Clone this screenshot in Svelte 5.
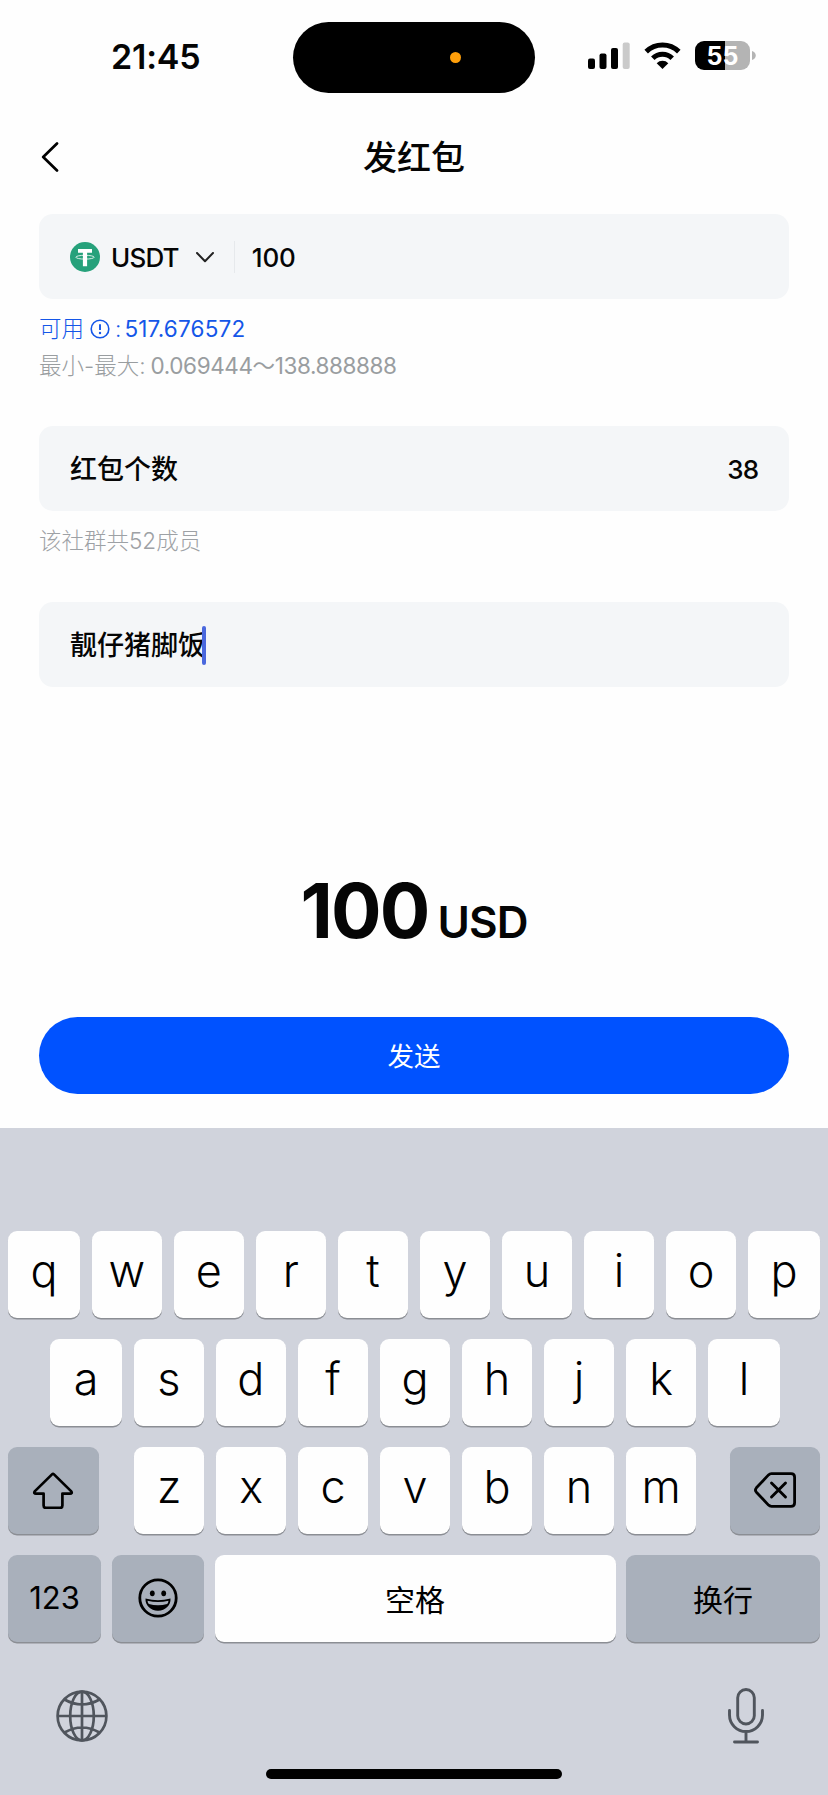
<script lang="ts">
	let currency = $state('USDT');
	let amount = $state('100');
	let count = $state('38');
	let message = $state('靓仔猪脚饭');

	const topKeys = 'qwertyuiop'.split('');
	const homeKeys = 'asdfghjkl'.split('');
	const bottomKeys = 'zxcvbnm'.split('');
</script>

<div class="screen">
	<header class="status">
		<div class="clock">21:45</div>
		<div class="island"><span class="mic-dot"></span></div>
		<div class="indicators">
			<svg class="signal" viewBox="0 0 42 27" aria-hidden="true">
				<rect x="0" y="16.5" width="7" height="10.5" rx="2" />
				<rect x="11.5" y="11.5" width="7" height="15.5" rx="2" />
				<rect x="23" y="6" width="7" height="21" rx="2" />
				<rect x="34.7" y="0.5" width="7" height="26.5" rx="2" fill="#cacaca" />
			</svg>
			<svg class="wifi" viewBox="0 0 37 27" aria-hidden="true">
				<path d="M2.2 9.6a23.2 23.2 0 0 1 32.6 0" fill="none" stroke="#000" stroke-width="5" />
				<path d="M8.8 16.3a13.8 13.8 0 0 1 19.4 0" fill="none" stroke="#000" stroke-width="5" />
				<path d="M18.5 27l-5.8-5.8a8.3 8.3 0 0 1 11.6 0z" />
			</svg>
			<div class="battery"><span>55</span></div>
			<svg class="nub" viewBox="0 0 4 9" aria-hidden="true">
				<path d="M0 0c5 1.5 5 7.5 0 9z" fill="#b4b4b4" />
			</svg>
		</div>
	</header>

	<nav class="navbar">
		<button type="button" class="back" aria-label="返回">
			<svg viewBox="0 0 18 30" width="18" height="30">
				<path d="M16 1.5L2.2 15 16 28.5" fill="none" stroke="#000" stroke-width="2.7" stroke-linecap="round" stroke-linejoin="round" />
			</svg>
		</button>
		<h1>发红包</h1>
	</nav>

	<main>
		<div class="field">
			<button type="button" class="currency">
				<svg class="coin" viewBox="0 0 30 30" aria-hidden="true">
					<circle cx="15" cy="15" r="15" fill="#26a17b" />
					<path d="M8 7h14v3.8h-4.9v13.4h-4.2V10.800H8z" fill="#fff" />
					<ellipse cx="15" cy="15.2" rx="9.2" ry="1.9" fill="none" stroke="#fff" stroke-width="0.8" />
				</svg>
				<span>{currency}</span>
				<svg class="chevron" viewBox="0 0 18 11" aria-hidden="true">
					<path d="M1 1l8 8.2L17 1" fill="none" stroke="#222" stroke-width="2" stroke-linecap="round" stroke-linejoin="round" />
				</svg>
			</button>
			<span class="divider"></span>
			<span class="amount">{amount}</span>
		</div>
		<div class="hints">
			<p class="available">
				<span>可用</span>
				<svg viewBox="0 0 20 20" width="20" height="20" aria-hidden="true">
					<circle cx="10" cy="10" r="8.8" fill="none" stroke="#1456e8" stroke-width="1.6" />
					<path d="M10 5.2v5.8" stroke="#1456e8" stroke-width="1.9" />
					<circle cx="10" cy="14" r="1.2" fill="#1456e8" />
				</svg>
				<span class="colon">:</span>
				<span class="balance">517.676572</span>
			</p>
			<p class="range"><span>最小-最大:</span><span class="limits">0.069444～138.888888</span></p>
		</div>

		<div class="field">
			<span class="label">红包个数</span>
			<span class="count">{count}</span>
		</div>
		<p class="members">该社群共52成员</p>

		<div class="field">
			<span class="label">{message}</span>
			<span class="caret"></span>
		</div>

		<div class="total"><strong>100</strong><span>USD</span></div>

		<button type="button" class="send">发送</button>
	</main>

	<section class="keyboard">
		<div class="row">
			{#each topKeys as key}
				<button type="button" class="key">{key}</button>
			{/each}
		</div>
		<div class="row home">
			{#each homeKeys as key}
				<button type="button" class="key">{key}</button>
			{/each}
		</div>
		<div class="row letters">
			<button type="button" class="key dark shift" aria-label="shift">
				<svg viewBox="0 0 42 37" width="42" height="37">
					<path d="M20 2.4q1-1 2 0L39.3 19.4q1.3 2.2-1.3 2.2H30.4v12q0 2.3-2.3 2.3H13.9q-2.3 0-2.3-2.3v-12H4q-2.6 0-1.3-2.2z" fill="none" stroke="#000" stroke-width="2.7" stroke-linejoin="round" />
				</svg>
			</button>
			{#each bottomKeys as key}
				<button type="button" class="key">{key}</button>
			{/each}
			<button type="button" class="key dark delete" aria-label="delete">
				<svg viewBox="0 0 42 36" width="42" height="36">
					<path d="M17.5 1.7H37q3.6 0 3.6 3.6v25.4q0 3.6-3.6 3.6H17.5q-1.8 0-3-1.2L2.4 20.2q-1.9-2.2 0-4.4L14.5 2.9q1.2-1.2 3-1.2z" fill="none" stroke="#000" stroke-width="2.8" />
					<path d="M17.5 11l14 14M31.5 11l-14 14" stroke="#000" stroke-width="2.9" stroke-linecap="round" />
				</svg>
			</button>
		</div>
		<div class="row bottom">
			<button type="button" class="key dark numbers">123</button>
			<button type="button" class="key dark" aria-label="emoji">
				<svg viewBox="0 0 40 40" width="40" height="40">
					<circle cx="20" cy="20" r="18.2" fill="none" stroke="#000" stroke-width="2.8" />
					<ellipse cx="14.3" cy="15.3" rx="2.4" ry="2.9" />
					<ellipse cx="25.7" cy="15.3" rx="2.4" ry="2.9" />
					<path d="M7.5 20.5q12.5 3.5 25 0c.5 6.5-5 12.3-12.5 12.3S7 27 7.5 20.5z" />
					<path d="M9.5 22.8q10.5 2.5 21 0-.3 2.2-1.3 3.3-9.2 2.4-18.4 0-1-1.1-1.3-3.3z" fill="#a9b0bb" />
				</svg>
			</button>
			<button type="button" class="key word">空格</button>
			<button type="button" class="key dark word">换行</button>
		</div>
		<div class="tools">
			<svg viewBox="0 0 52 52" width="52" height="52" fill="none" stroke="#50555d" stroke-width="2.7" aria-hidden="true">
				<circle cx="26" cy="26" r="24.4" />
				<ellipse cx="26" cy="26" rx="11.8" ry="24.4" />
				<path d="M26 1.4v49.2M1.4 26h49.2M8.5 9.5q17.5 10 35 0M8.5 42.5q17.5-10 35 0" />
			</svg>
			<svg viewBox="0 0 36 56" width="36" height="56" fill="none" stroke="#50555d" stroke-width="2.9" stroke-linecap="round" aria-hidden="true">
				<rect x="9.7" y="1.5" width="16.6" height="34.5" rx="8.3" />
				<path d="M1.5 22.5v4.5a16.5 16.5 0 0 0 33 0v-4.5M18 44v10M6.5 54h23" />
			</svg>
		</div>
		<div class="home-bar"></div>
	</section>
</div>

<style>
	:global(body) {
		margin: 0;
		background: #fff;
	}

	.screen {
		display: flex;
		flex-direction: column;
		box-sizing: border-box;
		width: 828px;
		height: 1795px;
		overflow: hidden;
		background: #fefefe;
		color: #050505;
		font-family: Inter, 'Noto Sans CJK SC', sans-serif;
	}

	button {
		padding: 0;
		border: none;
		background: none;
		color: inherit;
		font: inherit;
	}

	p,
	h1 {
		margin: 0;
	}

	svg {
		display: block;
		flex: none;
	}

	.status {
		display: grid;
		grid-template-columns: 293px 242px 1fr;
		height: 92px;
		padding-top: 22px;
		box-sizing: border-box;
	}

	.clock {
		padding-left: 111px;
		font-size: 34px;
		font-weight: 600;
		line-height: 70px;
		letter-spacing: -0.2px;
	}

	.island {
		display: flex;
		align-items: center;
		height: 71px;
		border-radius: 36px;
		background: #000;
	}

	.mic-dot {
		width: 11px;
		height: 11px;
		margin-left: 157px;
		border-radius: 50%;
		background: #ff9f0a;
	}

	.indicators {
		display: flex;
		align-items: center;
		height: 67px;
		padding-left: 53px;
	}

	.signal {
		width: 42px;
		height: 27px;
	}

	.wifi {
		width: 37px;
		height: 27px;
		margin-left: 14px;
	}

	.battery {
		width: 55px;
		height: 29px;
		margin-left: 14px;
		border-radius: 9px;
		background: linear-gradient(90deg, #000 30px, #b4b4b4 30px);
		color: #fff;
		font-size: 25px;
		font-weight: 700;
		line-height: 30px;
		text-align: center;
	}

	.nub {
		width: 4px;
		height: 9px;
		margin-left: 2px;
	}

	.navbar {
		display: grid;
		grid-template-columns: 58px 1fr 58px;
		align-items: center;
		height: 122px;
		box-sizing: border-box;
	}

	.back {
		display: flex;
		padding: 7px 0 0 41px;
	}

	h1 {
		padding-top: 9px;
		font-size: 34px;
		font-weight: 500;
		line-height: 50px;
		text-align: center;
	}

	main {
		display: flex;
		flex-direction: column;
		height: 914px;
		padding: 0 39px;
	}

	.field {
		display: flex;
		align-items: center;
		flex: none;
		height: 85px;
		padding: 1px 31px 0;
		box-sizing: border-box;
		border-radius: 14px;
		background: #f4f6f8;
		font-size: 26px;
		font-weight: 500;
	}

	.currency {
		display: flex;
		align-items: center;
		letter-spacing: -0.8px;
	}

	.coin {
		width: 30px;
		height: 30px;
		margin-right: 11px;
	}

	.chevron {
		width: 18px;
		height: 11px;
		margin-left: 17px;
	}

	.divider {
		width: 1px;
		height: 32px;
		margin: 0 17px 0 20px;
		background: #e6e9ec;
	}

	.amount {
		letter-spacing: -0.2px;
	}

	.count {
		margin-left: auto;
		letter-spacing: -1px;
	}

	.label {
		padding-top: 2px;
		font-size: 27px;
		line-height: 40px;
	}

	.caret {
		width: 4px;
		height: 39px;
		margin-left: -3px;
		border-radius: 2px;
		background: #4a68de;
	}

	.hints {
		height: 127px;
		padding-top: 12px;
		box-sizing: border-box;
		font-size: 22.5px;
		font-weight: 300;
		line-height: 36px;
	}

	.available {
		display: flex;
		align-items: center;
		height: 36px;
		color: #1456e8;
	}

	.available svg {
		margin: 0 5px 0 6px;
	}

	.colon {
		margin-right: 3px;
	}

	.balance {
		font-weight: 400;
		letter-spacing: 0.2px;
	}

	.range {
		display: flex;
		height: 36px;
		padding-top: 1px;
		color: #999da0;
	}

	.limits {
		margin-left: 5px;
		font-weight: 400;
		letter-spacing: -0.4px;
	}

	.members {
		height: 91px;
		padding-top: 12px;
		box-sizing: border-box;
		color: #9da1a5;
		font-size: 22.5px;
		font-weight: 300;
		line-height: 36px;
	}

	.total {
		display: flex;
		align-items: baseline;
		justify-content: center;
		height: 330px;
		padding-top: 179px;
		box-sizing: border-box;
		line-height: 90px;
	}

	.total strong {
		font-size: 75px;
		font-weight: 700;
		letter-spacing: -1.8px;
	}

	.total span {
		margin-left: 9px;
		font-size: 44px;
		font-weight: 600;
		letter-spacing: -0.9px;
	}

	.send {
		height: 77px;
		flex: none;
		border-radius: 39px;
		background: #0052ff;
		color: #fff;
		font-size: 26.5px;
		font-weight: 400;
		line-height: 78px;
	}

	.keyboard {
		display: flex;
		flex-direction: column;
		gap: 21px;
		flex: 1;
		padding: 103px 8px 0;
		background: #d0d3dc;
		color: #000;
	}

	.row {
		display: grid;
		grid-template-columns: 72px repeat(8, 1fr) 72px;
		gap: 11.6px;
		height: 87px;
	}

	.home {
		grid-template-columns: 72px repeat(7, 1fr) 72px;
		padding: 0 40px 0 42px;
	}

	.letters {
		grid-template-columns: 114.4px repeat(7, 70.4px) 1fr;
	}

	.shift {
		width: 90.5px;
	}

	.delete {
		justify-self: end;
		width: 90px;
	}

	.bottom {
		grid-template-columns: 93px 92.5px 401px 194px;
		gap: 0;
		justify-content: space-between;
	}

	.key {
		display: flex;
		align-items: center;
		justify-content: center;
		height: 86.5px;
		padding-bottom: 8px;
		box-sizing: border-box;
		border-radius: 9px;
		background: #fefefe;
		box-shadow: 0 1.5px 0 #8b8e94;
		font-size: 45px;
		font-weight: 350;
	}

	.dark {
		padding-bottom: 0;
		background: #a9b0bb;
	}

	.numbers {
		padding-bottom: 2px;
		font-size: 31px;
		font-weight: 400;
	}

	.word {
		padding: 0;
		font-size: 30px;
		font-weight: 400;
	}

	.tools {
		display: flex;
		align-items: center;
		justify-content: space-between;
		height: 56px;
		padding: 25px 56px 0 48px;
	}

	.home-bar {
		align-self: center;
		width: 296px;
		height: 10px;
		margin-top: 4px;
		border-radius: 5px;
		background: #000;
	}
</style>
